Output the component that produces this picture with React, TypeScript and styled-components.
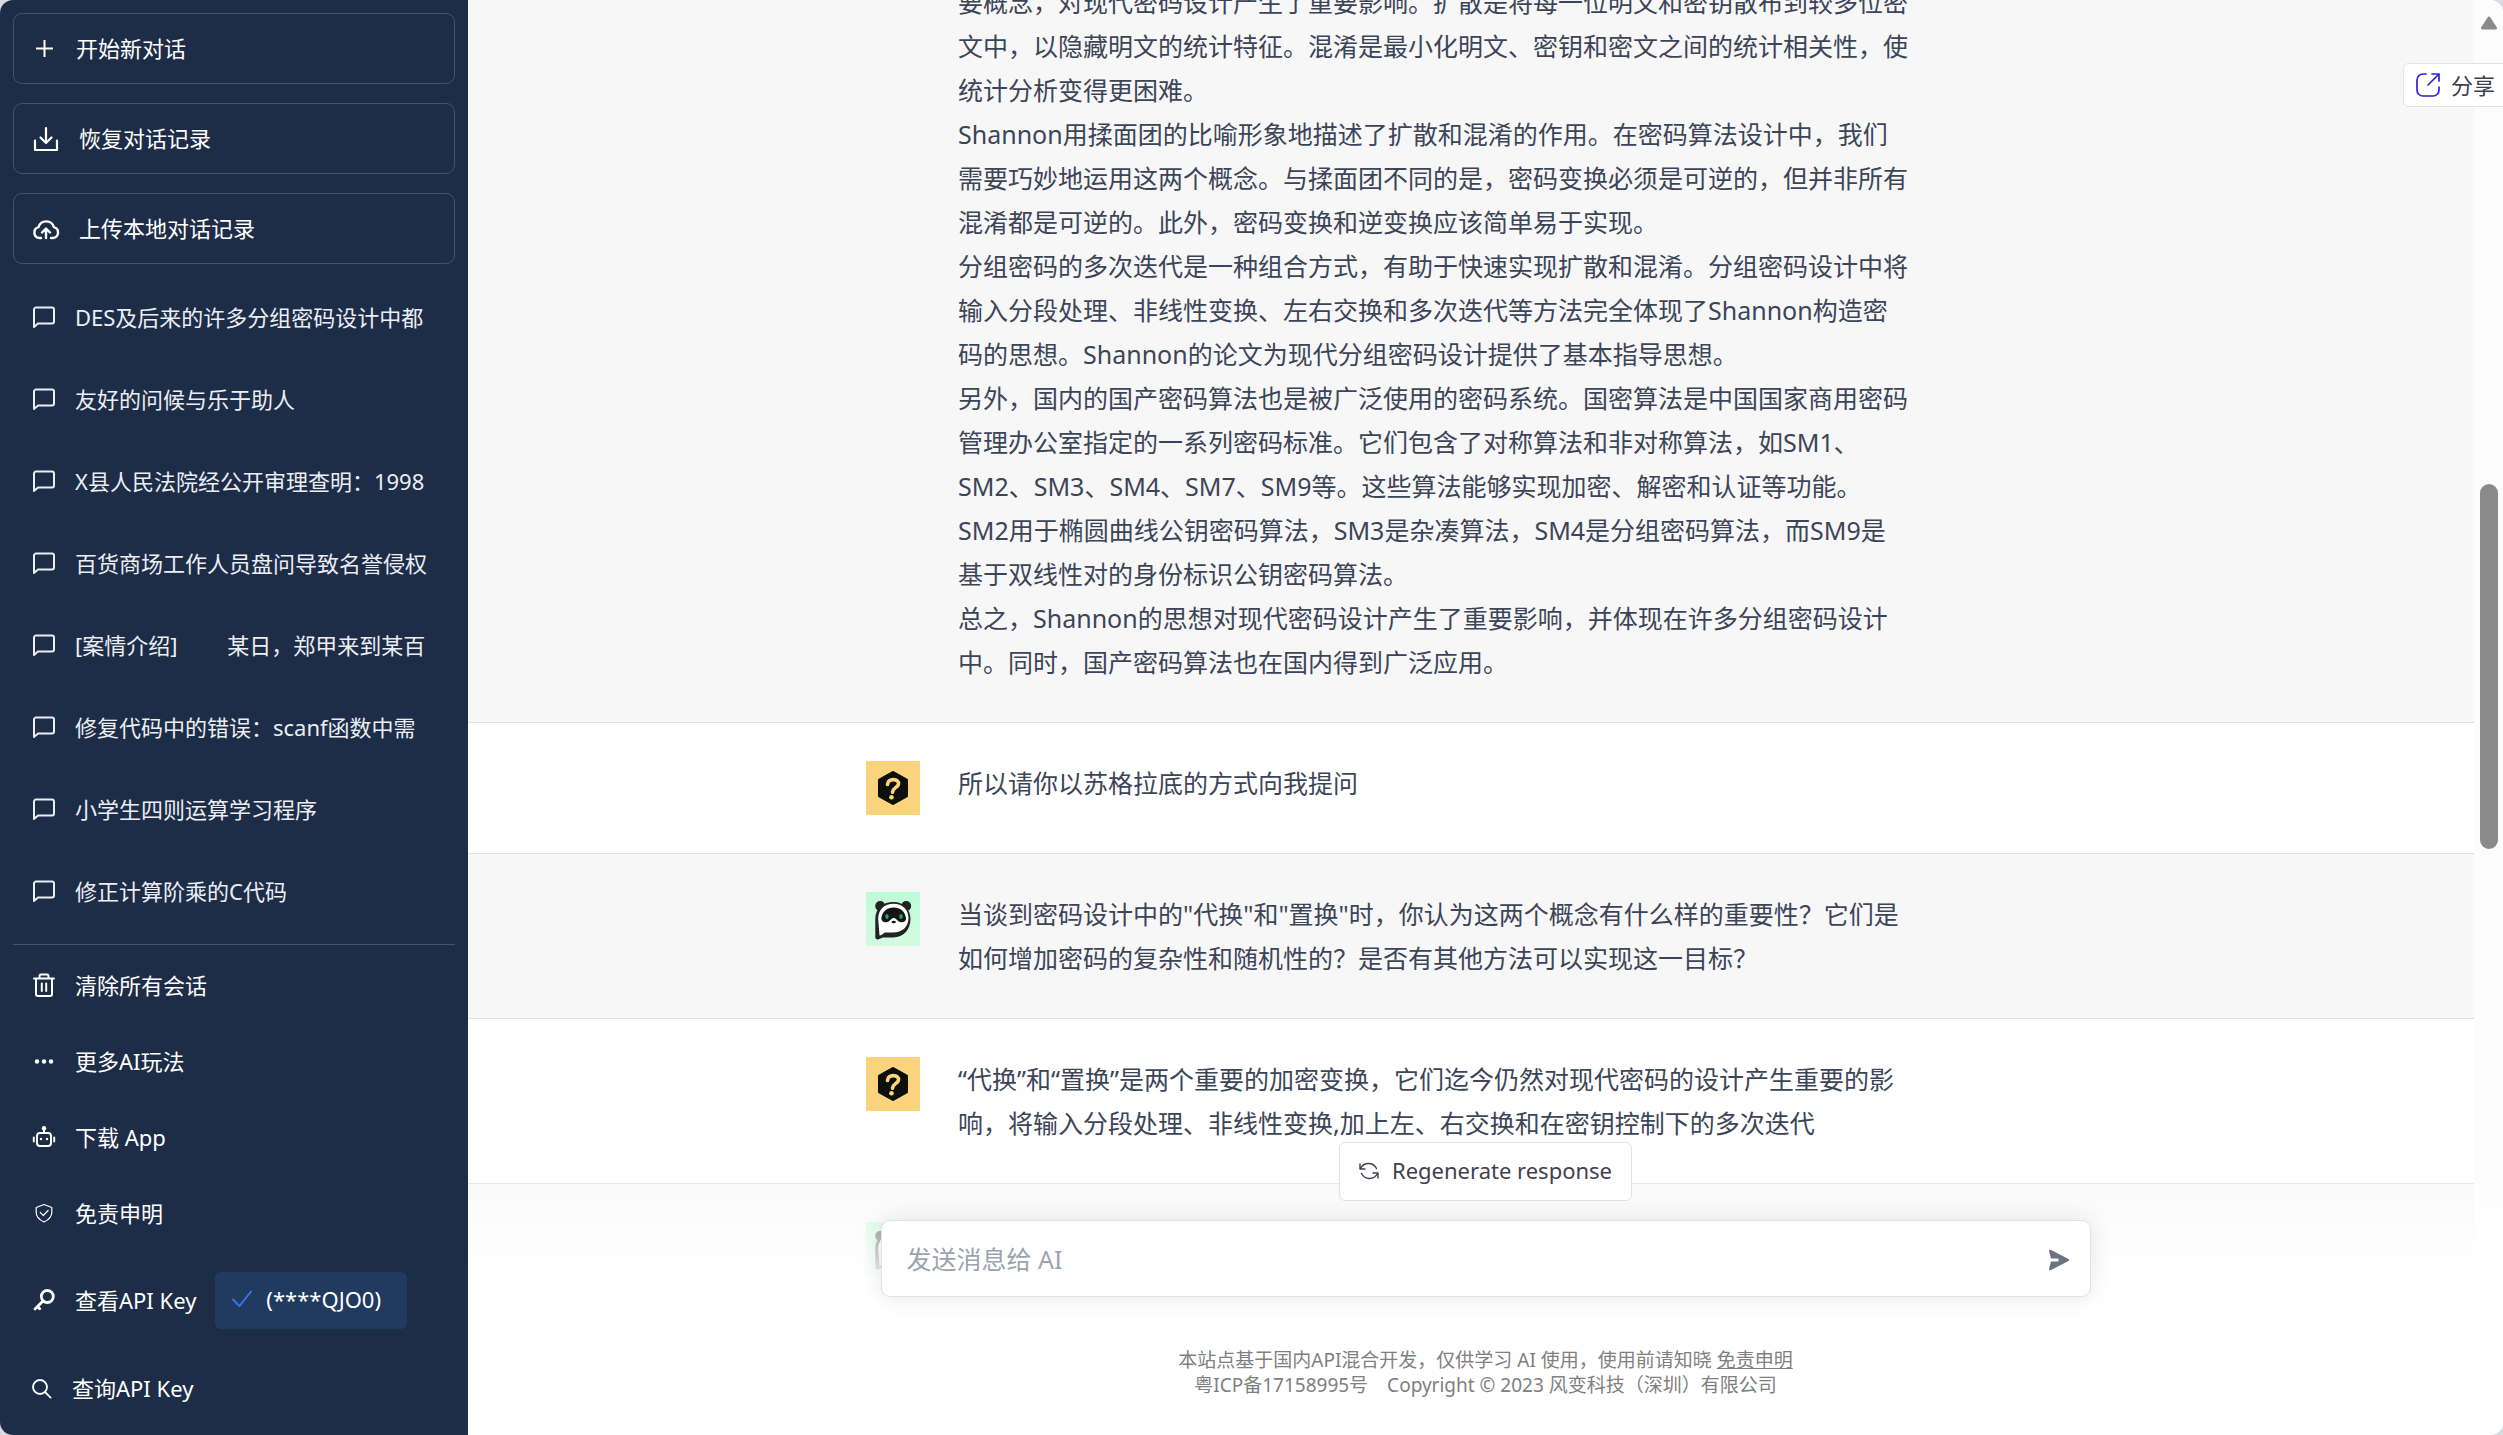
import React from "react";
import styled, { createGlobalStyle } from "styled-components";

const GlobalStyle = createGlobalStyle`
  *, *::before, *::after { box-sizing: border-box; }
  html, body, #root { height: 100%; }
  body {
    margin: 0;
    background: #d9dade;
    font-family: "Noto Sans", "Noto Sans CJK SC", sans-serif;
    font-size: 22px;
    overflow: hidden;
  }
  button, input, textarea { font: inherit; color: inherit; }
  p { margin: 0; }
`;

const Shell = styled.div`
  display: flex;
  height: 100vh;
  overflow: hidden;
  border-radius: 13px;
  background: #fff;
`;

const Label = styled.span`
  padding-bottom: 3px;
`;

/* ---------- Sidebar ---------- */

const Sidebar = styled.aside`
  display: flex;
  flex-direction: column;
  flex: none;
  width: 468px;
  padding: 13px 13px 0;
  background: #1d2d47;
  color: #fff;
`;

const Actions = styled.div`
  display: flex;
  flex-direction: column;
  gap: 19px;
`;

const ActionButton = styled.button`
  display: flex;
  align-items: center;
  gap: 18px;
  height: 71px;
  padding: 0 19px;
  border: 1px solid #455269;
  border-radius: 9px;
  background: none;
  text-align: left;
  cursor: pointer;
`;

const History = styled.nav`
  flex: 1;
  display: flex;
  flex-direction: column;
  min-height: 0;
  padding-top: 12px;
`;

const HistoryItem = styled.a`
  display: flex;
  align-items: center;
  gap: 19px;
  flex: none;
  height: 82px;
  padding: 0 19px;
  color: #eceef4;
  text-decoration: none;
  white-space: pre;
`;

const Menu = styled.nav`
  display: flex;
  flex-direction: column;
  padding: 2px 0 8px;
  border-top: 1px solid #455269;
`;

const MenuItem = styled.button<{ $height?: number }>`
  display: flex;
  align-items: center;
  gap: 19px;
  height: ${(p) => p.$height ?? 76}px;
  padding: 0 19px;
  border: 0;
  background: none;
  text-align: left;
  cursor: pointer;
`;

const KeyChip = styled.span`
  display: flex;
  align-items: center;
  gap: 13px;
  height: 57px;
  padding: 0 26px 0 16px;
  border-radius: 6px;
  background: #203a60;
`;

/* ---------- Conversation ---------- */

const Main = styled.main`
  position: relative;
  flex: 1;
  min-width: 0;
  display: flex;
`;

const Viewport = styled.div`
  flex: 1;
  min-width: 0;
  overflow: hidden;
`;

const Thread = styled.div`
  margin-top: -20px;
`;

const Message = styled.section<{ $answer?: boolean; $continued?: boolean }>`
  padding: ${(p) => (p.$continued ? 0 : 38)}px 0 38px;
  border-bottom: 1px solid #dedfe0;
  background: ${(p) => (p.$answer ? "#f7f7f7" : "#fff")};
`;

const MessageBody = styled.div`
  display: flex;
  gap: 38px;
  max-width: 1210px;
  min-height: 54px;
  margin: 0 auto;
`;

const AvatarSlot = styled.div`
  flex: none;
  width: 54px;
`;

const MessageText = styled.p`
  color: #3c4557;
  font-size: 25px;
  line-height: 44px;
  white-space: pre-line;
`;

const Scrollbar = styled.div`
  display: flex;
  flex-direction: column;
  align-items: center;
  flex: none;
  width: 29px;
  padding-top: 16px;
  background: #fcfcfc;
`;

const ScrollThumb = styled.div`
  width: 18px;
  height: 365px;
  margin-top: 454px;
  border-radius: 9px;
  background: #8a8a8a;
`;

const ShareButton = styled.button`
  position: absolute;
  top: 63px;
  right: -2px;
  display: flex;
  align-items: center;
  gap: 11px;
  height: 44px;
  padding: 0 9px 0 12px;
  border: 1px solid #e1e2e4;
  border-radius: 6px 0 0 6px;
  background: #fff;
  color: #40414f;
  cursor: pointer;
`;

/* ---------- Composer ---------- */

const Dock = styled.footer`
  position: absolute;
  left: 0;
  right: 0;
  bottom: 0;
  display: flex;
  flex-direction: column;
  align-items: center;
  padding: 38px 0 37px;
  background: linear-gradient(180deg, rgba(255, 255, 255, 0) 9%, #fff 55%);
`;

const Regenerate = styled.button`
  display: flex;
  align-items: center;
  gap: 13px;
  height: 59px;
  padding: 0 19px;
  border: 1px solid #e1e2e4;
  border-radius: 6px;
  background: #fff;
  color: #40414f;
  cursor: pointer;
`;

const Composer = styled.form`
  display: flex;
  align-items: center;
  width: 100%;
  max-width: 1210px;
  height: 77px;
  margin: 19px 0 51px;
  padding: 0 20px 0 25px;
  border: 1px solid #e3e3e4;
  border-radius: 9px;
  background: #fff;
  box-shadow: 0 0 24px rgba(0, 0, 0, 0.1);
`;

const Prompt = styled.input`
  flex: 1;
  min-width: 0;
  padding: 0;
  border: 0;
  outline: 0;
  background: none;
  color: #3c4557;
  font-size: 25px;
  &::placeholder { color: #9ca3af; opacity: 1; }
`;

const SendButton = styled.button`
  display: flex;
  padding: 0;
  border: 0;
  background: none;
  color: #6b7280;
  cursor: pointer;
`;

const Legal = styled.p`
  color: #808080;
  font-size: 19px;
  line-height: 25px;
  text-align: center;
  white-space: pre;
  a { color: inherit; }
`;

/* ---------- Icons ---------- */

const Svg = styled.svg<{ $stroke?: number }>`
  display: block;
  flex: none;
  fill: none;
  stroke: currentColor;
  stroke-width: ${(p) => p.$stroke ?? 2};
  stroke-linecap: round;
  stroke-linejoin: round;
`;

const PlusIcon = () => (
  <Svg width="25" height="25" viewBox="0 0 25 25">
    <path strokeLinecap="butt" d="M11.500 4v17M3 12.500h17" />
  </Svg>
);

const DownloadIcon = () => (
  <Svg width="28" height="28" viewBox="0 0 28 28" $stroke={2.2}>
    <path d="M13 3v15M7.500 12.500L13 18l5.500-5.500M2 15.500V25h22v-9.500" />
  </Svg>
);

const CloudUploadIcon = () => (
  <Svg width="28" height="28" viewBox="0 0 28 28" $stroke={2.4}>
    <path d="M8 23H6.500a5.500 5.500 0 0 1-1-10.800 8 8 0 0 1 15.400 0A5.500 5.500 0 0 1 20 23h-2M13 23v-9M9 17.500l4-4 4 4" />
  </Svg>
);

const ChatIcon = () => (
  <Svg width="24" height="24" viewBox="0 0 24 24">
    <path d="M2 22V4.500a2 2 0 0 1 2-2h16a2 2 0 0 1 2 2v12a2 2 0 0 1-2 2H6z" />
  </Svg>
);

const TrashIcon = () => (
  <Svg width="24" height="24" viewBox="0 0 24 24">
    <path d="M2 5.500h20M7.500 5V3A1.500 1.500 0 0 1 9 1.500h6A1.500 1.500 0 0 1 16.500 3v2M4 6v15a2 2 0 0 0 2 2h12a2 2 0 0 0 2-2V6M9.800 10.500V18M14.200 10.500V18" />
  </Svg>
);

const DotsIcon = () => (
  <Svg width="24" height="24" viewBox="0 0 24 24">
    <g fill="currentColor" stroke="none">
      <circle cx="5" cy="12.500" r="2.200" />
      <circle cx="12" cy="12.500" r="2.200" />
      <circle cx="19" cy="12.500" r="2.200" />
    </g>
  </Svg>
);

const RobotIcon = () => (
  <Svg width="24" height="24" viewBox="0 0 24 24">
    <rect x="5" y="8" width="14" height="13" rx="3" />
    <path d="M12 3v5M1.800 12.500v4M22.200 12.500v4" />
    <g fill="currentColor" stroke="none">
      <circle cx="12" cy="3.300" r="2.200" />
      <circle cx="9" cy="14" r="1.200" />
      <circle cx="15" cy="14" r="1.200" />
    </g>
  </Svg>
);

const ShieldIcon = () => (
  <Svg width="24" height="24" viewBox="0 0 24 24" $stroke={1.2}>
    <path d="M12 3.500l7.800 3v5c0 4.500-3.500 7.500-7.800 9.500-4.300-2-7.800-5-7.800-9.500v-5zM8.300 11.500l3 3 4.800-5" />
  </Svg>
);

const KeyIcon = () => (
  <Svg width="24" height="24" viewBox="0 0 24 24" $stroke={2.8}>
    <circle cx="15.300" cy="8.500" r="6" />
    <path d="M11 13l-8 8M5.500 18.500l2.200 2.200" />
  </Svg>
);

const SearchIcon = () => (
  <Svg width="21" height="24" viewBox="0 0 21 24" $stroke={1.8}>
    <circle cx="8" cy="11" r="7" />
    <path d="M13 16l5.600 5.600" />
  </Svg>
);

const CheckIcon = () => (
  <Svg width="22" height="22" viewBox="0 0 22 22">
    <path stroke="#3b76e8" d="M2 10.500L8.500 17 20 2.500" />
  </Svg>
);

const RefreshIcon = () => (
  <Svg width="20" height="20" viewBox="0 0 20 20" $stroke={1.4}>
    <path d="M1 2v5h5M1.500 6.500C3 3.500 6 1.500 9.500 1.500c3.500 0 6.500 2 8 5M19 16v-5h-5M18.500 11.500c-1.500 3-4.500 5-8 5-3.500 0-6.500-2-8-5" />
  </Svg>
);

const ShareIcon = () => (
  <Svg width="24" height="26" viewBox="0 0 24 26" $stroke={1.7}>
    <path stroke="#2a22dc" d="M10 2H7a6 6 0 0 0-6 6v10a6 6 0 0 0 6 6h10a6 6 0 0 0 6-6v-3M16 2h7v7M23 2L12 13" />
  </Svg>
);

const SendIcon = () => (
  <Svg width="22" height="24" viewBox="0 0 22 24">
    <path
      fill="currentColor"
      stroke="none"
      d="M1 3.800c0-1 .8-1.400 1.600-1L20.500 12c.9.500.9 1.500 0 2L2.600 23.200c-.8.400-1.600 0-1.600-1l2-7.700h7.500v-3H3z"
    />
  </Svg>
);

const ScrollUpIcon = () => (
  <Svg width="18" height="14" viewBox="0 0 18 14" $stroke={3}>
    <path fill="#8a8a8a" stroke="#8a8a8a" d="M9 2l6.500 10h-13z" />
  </Svg>
);

const UserAvatar = () => (
  <Svg width="54" height="54" viewBox="0 0 54 54">
    <rect width="54" height="54" fill="#f9d47c" stroke="none" />
    <path d="M27 11.500L40.500 19v16L27 42.500 13.500 35V19z" fill="#0e0e0c" stroke="#0e0e0c" strokeWidth="3" />
    <path
      d="M21.500 23.500c.3-3.300 2.600-4.900 6-4.900 3.300 0 5.300 1.700 5 4.400-.4 3.500-5.500 3.500-6 8.200"
      stroke="#f9d47c"
      strokeWidth="3.600"
    />
    <circle cx="25.500" cy="36.200" r="2.300" fill="#f9d47c" stroke="none" />
  </Svg>
);

const PandaAvatar = () => (
  <Svg width="54" height="54" viewBox="0 0 54 54">
    <defs>
      <linearGradient id="mint" x1="0" y1="0" x2="0" y2="1">
        <stop offset="0" stopColor="#bdfcd6" />
        <stop offset="1" stopColor="#d3fbe2" />
      </linearGradient>
    </defs>
    <rect width="54" height="54" fill="url(#mint)" stroke="none" />
    <g stroke="none">
      <circle cx="14.200" cy="14" r="5" fill="#222322" />
      <circle cx="40.200" cy="14" r="5" fill="#222322" />
      <path d="M27.500 10C37.500 10 44.500 17 44.500 27S38 45.500 27 45.500H17L12.500 47.300C10.500 48 9.300 47 9.300 45V27C9.300 16 17 10 27.500 10z" fill="#222322" />
      <path d="M27.500 11.800c8.800 0 15 5.700 15 14.200C42.500 35 36 40.500 27 40.500h-7.500c-2.500 0-2.500 3-6 3L12.200 27c0-9.500 6.300-15.200 15.300-15.200z" fill="#fff" />
      <path d="M27.700 15.500c6.500 0 11.300 4 12.300 10.500.5 3.700-4.300 5.500-7.300 3.500-2-1.500-3-3.500-5-3.500s-3 2-5 3.500c-3 2-7.800.2-7.300-3.500 1-6.500 5.800-10.500 12.300-10.500z" fill="#141615" />
      <ellipse cx="21" cy="24.500" rx="1.700" ry="2.600" fill="#2fa35f" />
      <ellipse cx="35" cy="24.500" rx="1.700" ry="2.600" fill="#2fa35f" />
      <ellipse cx="27.700" cy="30" rx="2.200" ry="1.200" fill="#141615" />
    </g>
  </Svg>
);

/* ---------- Data ---------- */

const history = [
  "DES及后来的许多分组密码设计中都",
  "友好的问候与乐于助人",
  "X县人民法院经公开审理查明：1998",
  "百货商场工作人员盘问导致名誉侵权",
  "[案情介绍]\u3000\u3000 某日，郑甲来到某百",
  "修复代码中的错误：scanf函数中需",
  "小学生四则运算学习程序",
  "修正计算阶乘的C代码",
];

const messages = [
  {
    answer: true,
    continued: true,
    text: `要概念，对现代密码设计产生了重要影响。扩散是将每一位明文和密钥散布到较多位密
文中，以隐藏明文的统计特征。混淆是最小化明文、密钥和密文之间的统计相关性，使
统计分析变得更困难。
Shannon用揉面团的比喻形象地描述了扩散和混淆的作用。在密码算法设计中，我们
需要巧妙地运用这两个概念。与揉面团不同的是，密码变换必须是可逆的，但并非所有
混淆都是可逆的。此外，密码变换和逆变换应该简单易于实现。
分组密码的多次迭代是一种组合方式，有助于快速实现扩散和混淆。分组密码设计中将
输入分段处理、非线性变换、左右交换和多次迭代等方法完全体现了Shannon构造密
码的思想。Shannon的论文为现代分组密码设计提供了基本指导思想。
另外，国内的国产密码算法也是被广泛使用的密码系统。国密算法是中国国家商用密码
管理办公室指定的一系列密码标准。它们包含了对称算法和非对称算法，如SM1、
SM2、SM3、SM4、SM7、SM9等。这些算法能够实现加密、解密和认证等功能。
SM2用于椭圆曲线公钥密码算法，SM3是杂凑算法，SM4是分组密码算法，而SM9是
基于双线性对的身份标识公钥密码算法。
总之，Shannon的思想对现代密码设计产生了重要影响，并体现在许多分组密码设计
中。同时，国产密码算法也在国内得到广泛应用。`,
  },
  { answer: false, text: "所以请你以苏格拉底的方式向我提问" },
  {
    answer: true,
    text: `当谈到密码设计中的"代换"和"置换"时，你认为这两个概念有什么样的重要性？它们是
如何增加密码的复杂性和随机性的？是否有其他方法可以实现这一目标？`,
  },
  {
    answer: false,
    text: `“代换”和“置换”是两个重要的加密变换，它们迄今仍然对现代密码的设计产生重要的影
响，将输入分段处理、非线性变换,加上左、右交换和在密钥控制下的多次迭代`,
  },
  { answer: true, text: "" },
];

export default function App() {
  return (
    <>
      <GlobalStyle />
      <Shell lang="zh-CN">
        <Sidebar>
          <Actions>
            <ActionButton>
              <PlusIcon />
              <Label>开始新对话</Label>
            </ActionButton>
            <ActionButton>
              <DownloadIcon />
              <Label>恢复对话记录</Label>
            </ActionButton>
            <ActionButton>
              <CloudUploadIcon />
              <Label>上传本地对话记录</Label>
            </ActionButton>
          </Actions>
          <History>
            {history.map((title) => (
              <HistoryItem href="#" key={title}>
                <ChatIcon />
                <Label>{title}</Label>
              </HistoryItem>
            ))}
          </History>
          <Menu>
            <MenuItem><TrashIcon /><Label>清除所有会话</Label></MenuItem>
            <MenuItem><DotsIcon /><Label>更多AI玩法</Label></MenuItem>
            <MenuItem><RobotIcon /><Label>下载 App</Label></MenuItem>
            <MenuItem><ShieldIcon /><Label>免责申明</Label></MenuItem>
            <MenuItem $height={98}>
              <KeyIcon />
              <Label>查看API Key</Label>
              <KeyChip>
                <CheckIcon />
                <Label>(****QJO0)</Label>
              </KeyChip>
            </MenuItem>
            <MenuItem $height={78}><SearchIcon /><Label>查询API Key</Label></MenuItem>
          </Menu>
        </Sidebar>
        <Main>
          <Viewport>
            <Thread>
              {messages.map((m, i) => (
                <Message $answer={m.answer} $continued={m.continued} key={i}>
                  <MessageBody>
                    <AvatarSlot>
                      {!m.continued && (m.answer ? <PandaAvatar /> : <UserAvatar />)}
                    </AvatarSlot>
                    <MessageText>{m.text}</MessageText>
                  </MessageBody>
                </Message>
              ))}
            </Thread>
          </Viewport>
          <Scrollbar>
            <ScrollUpIcon />
            <ScrollThumb />
          </Scrollbar>
          <Dock>
            <Regenerate>
              <RefreshIcon />
              <Label>Regenerate response</Label>
            </Regenerate>
            <Composer onSubmit={(e) => e.preventDefault()}>
              <Prompt aria-label="发送消息给 AI" placeholder="发送消息给 AI" />
              <SendButton aria-label="发送"><SendIcon /></SendButton>
            </Composer>
            <Legal>
              本站点基于国内API混合开发，仅供学习 AI 使用，使用前请知晓 <a href="#">免责申明</a>
            </Legal>
            <Legal>{"粤ICP备17158995号\u3000Copyright © 2023 风变科技（深圳）有限公司"}</Legal>
          </Dock>
          <ShareButton><ShareIcon /><Label>分享</Label></ShareButton>
        </Main>
      </Shell>
    </>
  );
}
